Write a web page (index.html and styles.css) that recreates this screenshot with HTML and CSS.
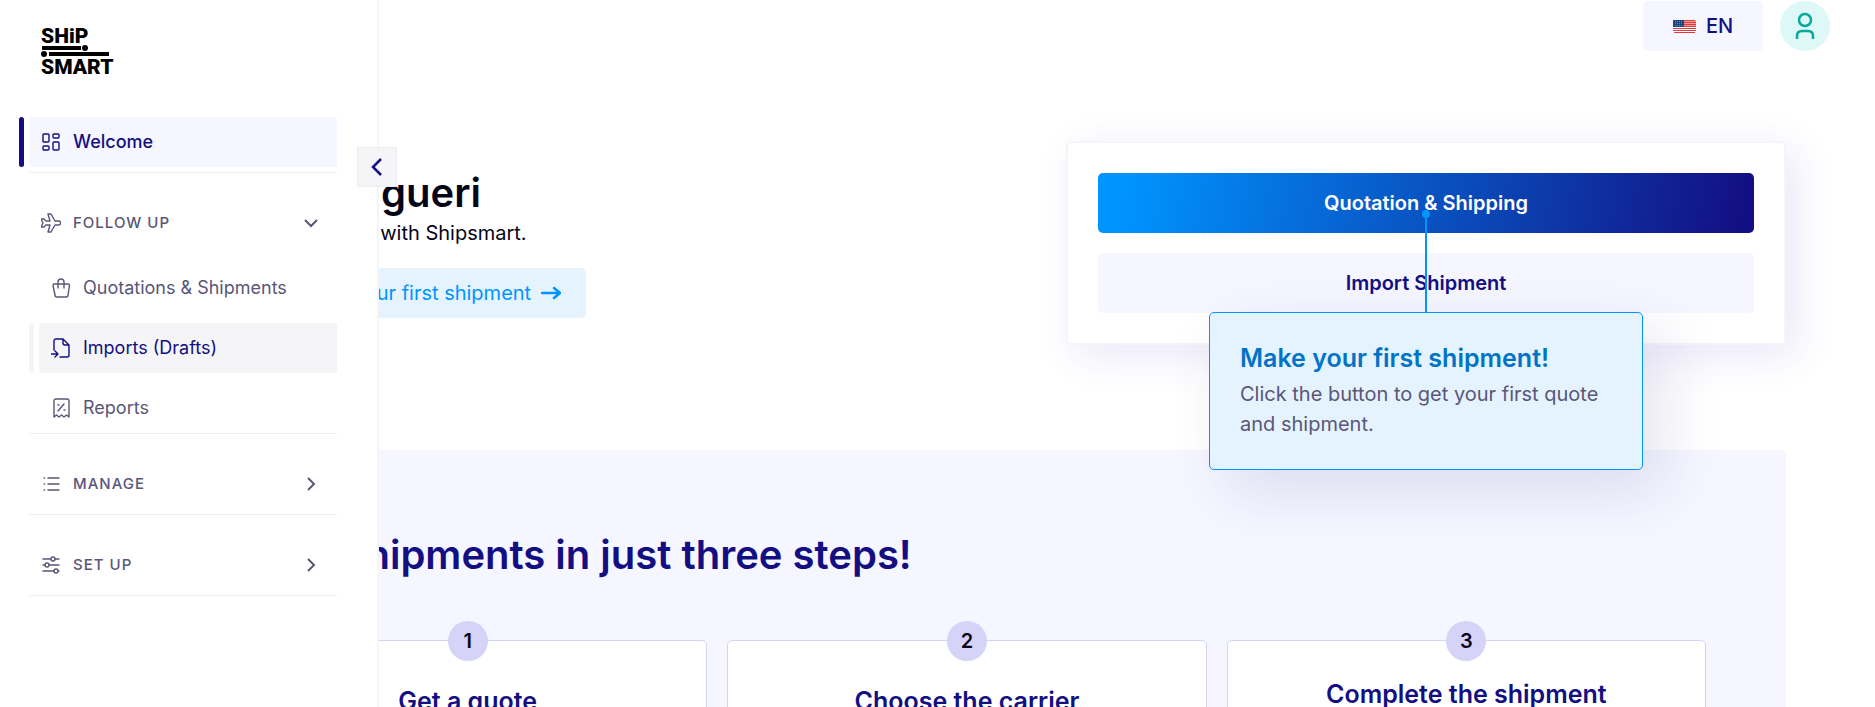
FILE: index.html
```html
<!DOCTYPE html>
<html lang="en">
<head>
  <meta charset="UTF-8" />
  <meta name="viewport" content="width=device-width, initial-scale=1.0"/>
  <title>Shipsmart</title>
  <link rel="stylesheet" href="styles.css">
</head>
<body>
  <aside class="sidebar">
    <a class="logo" href="#" aria-label="Shipsmart">
      <svg width="80" height="54" viewBox="0 0 80 54">
        <text x="0" y="17">SHiP</text>
        <rect x="1" y="20" width="39" height="4"/>
        <circle cx="44" cy="22" r="3"/>
        <circle cx="3" cy="28" r="3"/>
        <rect x="8" y="26" width="60" height="4"/>
        <text x="0" y="48">SMART</text>
      </svg>
    </a>

    <nav>
      <div class="group first">
        <a class="item active" href="#">
          <svg class="icon" viewBox="0 0 20 20"><rect x="2" y="2" width="6" height="8" rx="1"/><rect x="12" y="2" width="6" height="4" rx="1"/><rect x="2" y="14" width="6" height="4" rx="1"/><rect x="12" y="10" width="6" height="8" rx="1"/></svg>
          Welcome
        </a>
      </div>

      <div class="group open">
        <button class="item heading" type="button" aria-expanded="true">
          <svg class="icon" viewBox="0 0 20 20"><path d="M14 8h3.500a2 2 0 0 1 0 4H14l-4 7H7l2-7H5l-2 2H0l2-4-2-4h3l2 2h4L7 1h3l4 7z"/></svg>
          FOLLOW UP
          <svg class="chevron" viewBox="0 0 16 16"><path d="M2 5l6 6 6-6"/></svg>
        </button>
        <div class="submenu">
          <a class="item" href="#">
            <svg class="icon" viewBox="0 0 20 20"><path d="M3 6h14q1.500 0 1.500 1.500L17 17q0 2-2 2H6q-2 0-2-2L2 7.500Q2 6 3 6zM7 10V4a3 3 0 0 1 6 0v6"/></svg>
            Quotations &amp; Shipments
          </a>
          <a class="item hover" href="#">
            <svg class="icon" viewBox="0 0 20 20"><path d="M3 12V3q0-2 2-2h7l6 6v10q0 2-2 2H9M12 1v4q0 2 2 2h4M0 16h7M4 13l3 3-3 3"/></svg>
            Imports (Drafts)
          </a>
          <a class="item" href="#">
            <svg class="icon" viewBox="0 0 20 20"><path d="M3 19V3q0-2 2-2h11q2 0 2 2v16l-2.500-2-2.500 2-2.500-2L8 19l-2.500-2zM7 13l6-7M7 7h1M13 12h1"/></svg>
            Reports
          </a>
        </div>
      </div>

      <div class="group">
        <button class="item heading" type="button">
          <svg class="icon" viewBox="0 0 20 20"><path d="M7 4h11M7 10h11M7 16h11M3 4h.5M3 10h.5M3 16h.5"/></svg>
          MANAGE
          <svg class="chevron" viewBox="0 0 16 16"><path d="M5 2l6 6-6 6"/></svg>
        </button>
      </div>

      <div class="group">
        <button class="item heading" type="button">
          <svg class="icon" viewBox="0 0 20 20"><path d="M2 4h8M14 4h4M2 10h2M8 10h10M2 16h11M17 16h1"/><circle cx="12" cy="4" r="2"/><circle cx="6" cy="10" r="2"/><circle cx="15" cy="16" r="2"/></svg>
          SET UP
          <svg class="chevron" viewBox="0 0 16 16"><path d="M5 2l6 6-6 6"/></svg>
        </button>
      </div>
    </nav>

    <button class="collapse" type="button" aria-label="Collapse menu">
      <svg width="20" height="20" viewBox="0 0 20 20"><path d="M14 2l-8 8 8 8"/></svg>
    </button>
  </aside>

  <header class="topbar">
    <button class="language" type="button">
      <svg width="23" height="13" viewBox="0 0 23 13">
        <rect width="23" height="13" rx="2" fill="#fff"/>
        <rect width="23" height="7" rx="1" fill="#f09a9a"/>
        <path d="M1 .5h21M11 2.500h12M11 4.500h12M11 6.500h12M0 8.500h23M0 10.500h23M1 12.500h21" stroke="#df3a3a"/>
        <rect width="11" height="7" rx="1" fill="#1d4280"/>
        <path d="M2 1.500h8M2 3.500h8M2 5.500h8" stroke="#6f88b3" stroke-dasharray="1 1"/>
      </svg>
      EN
    </button>
    <button class="avatar" type="button" aria-label="Account">
      <svg width="26" height="28" viewBox="0 0 26 28"><circle cx="13" cy="8" r="6"/><path d="M5 27v-3q0-5 5-5h6q5 0 5 5v3"/></svg>
    </button>
  </header>

  <main class="content">
    <section class="hero">
      <div class="intro">
        <h1>Hello, Barangueri</h1>
        <p>Simplify your shipments with Shipsmart.</p>
        <a class="intro-link" href="#">
          Click here to make your first shipment
          <svg width="20" height="14" viewBox="0 0 20 14"><path d="M1 7h18M13 2l6 5-6 5"/></svg>
        </a>
      </div>

      <div class="actions">
        <button class="btn primary" type="button">Quotation &amp; Shipping</button>
        <button class="btn secondary" type="button">Import Shipment</button>
        <div class="tooltip" role="tooltip">
          <h3>Make your first shipment!</h3>
          <p>Click the button to get your first quote and shipment.</p>
        </div>
      </div>
    </section>

    <section class="steps">
      <h2>Make shipments in just three steps!</h2>
      <div class="step-list">
        <div class="step">
          <span class="number">1</span>
          <h3>Get a quote</h3>
        </div>
        <div class="step">
          <span class="number">2</span>
          <h3>Choose the carrier</h3>
        </div>
        <div class="step last">
          <span class="number">3</span>
          <h3>Complete the shipment</h3>
        </div>
      </div>
    </section>
  </main>
</body>
</html>
```
FILE: styles.css
```css
* {
  box-sizing: border-box;
}
body {
  font-family: Inter, "Liberation Sans", sans-serif;
  font-size: 20px;
  line-height: 30px;
  margin: 0;
  height: 100vh;
  overflow: hidden;
  background: #fff;
  color: #060417;
}
h1, h2, h3, p {
  margin: 0;
}
h1, h2, h3 {
  font-weight: 600;
}
a {
  color: inherit;
  text-decoration: none;
}
button {
  font: inherit;
  color: inherit;
  border: 0;
  padding: 0;
  cursor: pointer;
}
svg {
  flex: none;
}

/* sidebar lies over the content while it is expanded */
.sidebar {
  position: fixed;
  z-index: 10;
  top: 0;
  bottom: 0;
  left: 0;
  width: 379px;
  padding: 26px 40px 0 29px;
  background: #fff;
  border-right: 2px solid #f5f5f8;
}
.logo {
  display: block;
  height: 54px;
  margin: 0 0 37px 12px;
}
.logo text {
  font-family: Roboto, sans-serif;
  font-size: 21px;
  font-weight: 900;
}
.group {
  margin-top: 25px;
  padding-bottom: 5px;
  border-bottom: 1px solid #ececf1;
}
.group.first {
  margin-top: 0;
}
.group.open {
  padding-bottom: 0;
}
.item {
  position: relative;
  display: flex;
  align-items: center;
  gap: 12px;
  width: 100%;
  height: 50px;
  padding: 0 18px 0 12px;
  border-radius: 4px;
  background: none;
  color: #5a5678;
  font-size: 18px;
}
.icon {
  width: 20px;
  height: 20px;
  fill: none;
  stroke: currentColor;
  stroke-width: 1.4;
  stroke-linecap: round;
  stroke-linejoin: round;
}
.item.active {
  background: #f5f6ff;
  color: #130f82;
  font-weight: 500;
}
.item.active::before,
.item.hover::before {
  content: "";
  position: absolute;
  left: -10px;
  top: 0;
  bottom: 0;
  width: 5px;
  border-radius: 3px;
  background: #130f82;
}
.heading {
  font-size: 15px;
  font-weight: 500;
  letter-spacing: 1px;
}
.chevron {
  width: 16px;
  height: 16px;
  margin-left: auto;
  fill: none;
  stroke: currentColor;
  stroke-width: 2;
}
.submenu {
  display: flex;
  flex-direction: column;
  gap: 10px;
  margin-top: 15px;
  padding-left: 10px;
}
.item.hover {
  background: #f5f5f8;
  color: #130f82;
  border-radius: 0;
}
.item.hover::before {
  background: #f5f5f8;
}
.collapse {
  position: absolute;
  top: 147px;
  right: -20px;
  width: 40px;
  height: 40px;
  display: flex;
  align-items: center;
  justify-content: center;
  background: #f5f5f8;
  border: 1px solid #ececf1;
}
.collapse path {
  fill: none;
  stroke: #130f82;
  stroke-width: 2.5;
}

/* top bar */
.topbar {
  display: flex;
  justify-content: flex-end;
  gap: 17px;
  padding: 1px 45px 0 0;
}
.language {
  display: flex;
  align-items: center;
  justify-content: center;
  gap: 10px;
  width: 120px;
  height: 50px;
  border-radius: 5px;
  background: #f5f6ff;
  color: #130f82;
  font-weight: 500;
}
.avatar {
  display: flex;
  align-items: center;
  justify-content: center;
  width: 50px;
  height: 50px;
  border-radius: 50%;
  background: #ddf8f6;
}
.avatar svg {
  fill: none;
  stroke: #08a99d;
  stroke-width: 2.5;
}

/* content */
.content {
  padding: 90px 89px 0 148px;
}
.hero {
  display: flex;
  align-items: center;
  justify-content: space-between;
  margin-bottom: 105px;
}
h1, h2 {
  font-size: 40px;
  line-height: 50px;
}
.intro p {
  margin-bottom: 20px;
}
.intro-link {
  display: inline-flex;
  align-items: center;
  gap: 10px;
  height: 50px;
  padding: 0 25px;
  border-radius: 5px;
  background: #e5f3ff;
  color: #0094ff;
}
.intro-link path {
  fill: none;
  stroke: currentColor;
  stroke-width: 2.5;
  stroke-linecap: round;
  stroke-linejoin: round;
}
.actions {
  position: relative;
  display: flex;
  flex-direction: column;
  gap: 20px;
  width: 44%;
  max-width: 720px;
  padding: 30px;
  border: 2px solid #f5f5f8;
  border-radius: 5px;
  background: #fff;
  box-shadow: 10px 10px 40px rgba(73, 61, 206, 0.12);
}
.btn {
  height: 60px;
  border-radius: 5px;
  font-weight: 600;
}
.btn.primary {
  background: linear-gradient(100deg, #0094ff 4%, #130f82 98%);
  color: #fff;
}
.btn.secondary {
  background: #f5f6ff;
  color: #130f82;
}
.tooltip {
  position: absolute;
  z-index: 2;
  top: 169px;
  left: 50%;
  transform: translateX(-50%);
  width: 434px;
  padding: 30px;
  border: 1px solid #0094ff;
  border-radius: 5px;
  background: #e5f3ff;
  color: #5a5678;
  box-shadow: 20px 20px 60px rgba(73, 61, 150, 0.14);
}
.tooltip::before {
  content: "";
  position: absolute;
  left: 50%;
  bottom: 100%;
  width: 2px;
  height: 99px;
  margin-left: -1px;
  background: #0094ff;
}
.tooltip::after {
  content: "";
  position: absolute;
  left: 50%;
  top: -103px;
  width: 8px;
  height: 8px;
  margin-left: -4px;
  border-radius: 50%;
  background: #0094ff;
}
.tooltip h3 {
  margin-bottom: 6px;
  font-size: 25px;
  color: #0073c6;
}
.steps {
  padding: 80px;
  border-radius: 5px;
  background: #f5f6ff;
}
.steps h2 {
  margin-bottom: 60px;
  color: #130f82;
}
.step-list {
  display: grid;
  grid-template-columns: repeat(3, 1fr);
  gap: 20px;
}
.step {
  position: relative;
  min-height: 300px;
  padding: 45px 30px 30px;
  border: 1px solid #d5d4f8;
  border-radius: 5px;
  background: #fff;
  text-align: center;
}
.step.last {
  padding-top: 38px;
}
.step h3 {
  font-size: 25px;
  color: #130f82;
}
.number {
  position: absolute;
  top: -20px;
  left: 50%;
  width: 40px;
  height: 40px;
  margin-left: -20px;
  border-radius: 50%;
  background: #d5d4f8;
  font-weight: 600;
  line-height: 40px;
}
```
